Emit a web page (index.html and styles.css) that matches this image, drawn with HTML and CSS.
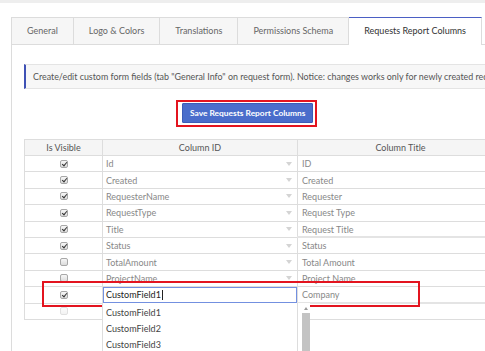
FILE: index.html
```html
<!DOCTYPE html>
<html lang="en">
<head>
    <meta charset="UTF-8">
    <meta name="viewport" content="width=device-width, initial-scale=1.0">
    <title>Settings - Requests Report Columns</title>
    <link rel="stylesheet" href="styles.css">
</head>
<body>
    <div class="topbar"></div>
    <div class="page">
        <ul class="tabs">
            <li class="tab">General</li>
            <li class="tab">Logo &amp; Colors</li>
            <li class="tab">Translations</li>
            <li class="tab">Permissions Schema</li>
            <li class="tab active">Requests Report Columns</li>
        </ul>
        <div class="panel">
            <div class="notice">Create/edit custom form fields (tab "General Info" on request form). Notice: changes works only for newly created requests.</div>

            <div class="actions">
                <span class="highlight">
                    <button class="btn-save">Save Requests Report Columns</button>
                </span>
            </div>

            <div class="grid-wrap">
                <table class="grid">
                    <thead>
                        <tr>
                            <th class="col-visible">Is Visible</th>
                            <th class="col-id">Column ID</th>
                            <th class="col-title">Column Title</th>
                        </tr>
                    </thead>
                    <tbody>
                        <tr>
                            <td class="center"><span class="chk checked"></span></td>
                            <td><div class="select">Id</div></td>
                            <td class="title">ID</td>
                        </tr>
                        <tr>
                            <td class="center"><span class="chk checked"></span></td>
                            <td><div class="select">Created</div></td>
                            <td class="title">Created</td>
                        </tr>
                        <tr>
                            <td class="center"><span class="chk checked"></span></td>
                            <td><div class="select">RequesterName</div></td>
                            <td class="title">Requester</td>
                        </tr>
                        <tr>
                            <td class="center"><span class="chk checked"></span></td>
                            <td><div class="select">RequestType</div></td>
                            <td class="title">Request Type</td>
                        </tr>
                        <tr>
                            <td class="center"><span class="chk checked"></span></td>
                            <td><div class="select">Title</div></td>
                            <td class="title thick">Request Title</td>
                        </tr>
                        <tr>
                            <td class="center"><span class="chk checked"></span></td>
                            <td><div class="select">Status</div></td>
                            <td class="title">Status</td>
                        </tr>
                        <tr>
                            <td class="center"><span class="chk"></span></td>
                            <td><div class="select">TotalAmount</div></td>
                            <td class="title">Total Amount</td>
                        </tr>
                        <tr>
                            <td class="center"><span class="chk"></span></td>
                            <td><div class="select">ProjectName</div></td>
                            <td class="title">Project Name</td>
                        </tr>
                        <tr class="editing">
                            <td class="center"><span class="chk checked"></span></td>
                            <td><div class="select active">CustomField1<span class="caret"></span></div></td>
                            <td class="title thick">Company</td>
                        </tr>
                        <tr>
                            <td class="center"><span class="chk faded"></span></td>
                            <td><div class="select"></div></td>
                            <td class="title"></td>
                        </tr>
                    </tbody>
                </table>

                <div class="row-highlight"></div>

                <div class="dropdown">
                    <ul class="options">
                        <li>CustomField1</li>
                        <li>CustomField2</li>
                        <li>CustomField3</li>
                        <li>CustomField4</li>
                    </ul>
                    <div class="scrollbar">
                        <span class="arrow"></span>
                        <span class="thumb"></span>
                    </div>
                </div>
            </div>
        </div>
    </div>
</body>
</html>
```

FILE: styles.css
```css
* {
    margin: 0;
    padding: 0;
    box-sizing: border-box;
}

body {
    font-family: "Lato", "Open Sans", sans-serif;
    font-size: 9px;
    color: #555;
    background-color: #fff;
    overflow: hidden;
    height: 351px;
}

.topbar {
    height: 3px;
    background-color: #eeeeee;
}

.page {
    padding: 14px 0 0 11px;
    width: 720px;
}

/* tabs */
.tabs {
    display: flex;
    list-style: none;
    height: 27px;
}

.tab {
    height: 27px;
    line-height: 25px;
    padding: 0 15px;
    color: #666;
    background-color: #f6f6f6;
    border: 1px solid #dcdcdc;
    border-left: none;
    border-bottom: none;
    white-space: nowrap;
}

.tab:first-child {
    border-left: 1px solid #dcdcdc;
}

.tab.active {
    position: relative;
    height: 28px;
    color: #333;
    background-color: #fff;
    border-top-color: #4b5fc4;
    z-index: 1;
}

/* panel */
.panel {
    border-left: 1px solid #dcdcdc;
    border-top: 1px solid #dcdcdc;
    padding: 19px 0 0 12px;
    height: 400px;
}

.notice {
    height: 25px;
    line-height: 23px;
    padding: 0 8px 0 7px;
    background-color: #f7f7f7;
    border: 1px solid #e4e4e4;
    border-left: 2px solid #3f51b5;
    white-space: nowrap;
    overflow: hidden;
    font-size: 8.9px;
    color: #555;
}

.actions {
    margin-top: 11px;
    padding-left: 152px;
    height: 27px;
}

.highlight {
    display: inline-block;
    border: 2px solid #e3141f;
    padding: 1px 2px 2px 4px;
}

.btn-save {
    display: block;
    height: 20px;
    padding: 0 7px;
    font-family: "Lato", "Open Sans", sans-serif;
    font-size: 8.4px;
    font-weight: 700;
    color: #fff;
    background-color: #4a6dcb;
    border: 1px solid #3b5cb8;
    border-radius: 1px;
}

/* grid */
.grid-wrap {
    position: relative;
    margin-top: 12px;
}

.grid {
    border-collapse: collapse;
    table-layout: fixed;
    width: 480px;
}

.grid th,
.grid td {
    border: 1px solid #dddddd;
    padding: 0;
    font-weight: normal;
    white-space: nowrap;
    overflow: hidden;
}

.grid th {
    height: 15.4px;
    line-height: 15px;
    background-color: #f5f5f5;
    color: #555;
    text-align: center;
}

.col-visible {
    width: 78px;
}

.col-id {
    width: 195px;
}

.grid td {
    color: #888;
}

.grid td.center {
    text-align: center;
    line-height: 0;
}

.grid td.title {
    padding-left: 4px;
}

.grid td.thick {
    border-bottom: 2px solid #e4e4e4;
}

.select {
    display: flex;
    align-items: center;
    justify-content: space-between;
    height: 15.4px;
    padding: 0 5px 0 3px;
}

.select::after {
    content: "";
    border-left: 3px solid transparent;
    border-right: 3px solid transparent;
    border-top: 4px solid #d4d4d4;
}

.select:empty::after {
    display: none;
}

.select.active {
    justify-content: flex-start;
    color: #222;
    border: 1px solid #7390e0;
    padding-left: 2px;
}

.select.active::after {
    display: none;
}

.caret {
    display: inline-block;
    width: 1px;
    height: 10px;
    background-color: #222;
    margin-left: 1px;
}

/* checkboxes */
.chk {
    display: inline-block;
    width: 8px;
    height: 8px;
    border: 1px solid #a8a8a8;
    border-radius: 2px;
    background: linear-gradient(#f7f7f7, #dcdcdc);
    position: relative;
}

.chk.checked::after {
    content: "";
    position: absolute;
    left: 2px;
    top: 0;
    width: 2px;
    height: 4px;
    border-right: 1.5px solid #333;
    border-bottom: 1.5px solid #333;
    transform: rotate(40deg);
}

.chk.faded {
    opacity: 0.35;
}

/* overlays */
.row-highlight {
    position: absolute;
    left: 18px;
    top: 142px;
    width: 378px;
    height: 26px;
    border: 2px solid #e3141f;
    pointer-events: none;
}

.dropdown {
    position: absolute;
    left: 78px;
    top: 164px;
    width: 208px;
    height: 80px;
    display: flex;
    background-color: #fff;
    border-left: 1px solid #dddddd;
}

.options {
    list-style: none;
    width: 195px;
    padding-top: 2px;
    border-right: 1px solid #dddddd;
}

.options li {
    height: 16px;
    line-height: 16px;
    padding-left: 3px;
    color: #444;
}

.scrollbar {
    display: flex;
    flex-direction: column;
    align-items: center;
    width: 12px;
    padding: 3px 0 0 3px;
}

.arrow {
    width: 0;
    height: 0;
    border-left: 2px solid transparent;
    border-right: 2px solid transparent;
    border-bottom: 3px solid #999;
    margin: 1px 0 3px;
}

.thumb {
    width: 8px;
    flex: 1;
    background-color: #c3c3c3;
}
```
